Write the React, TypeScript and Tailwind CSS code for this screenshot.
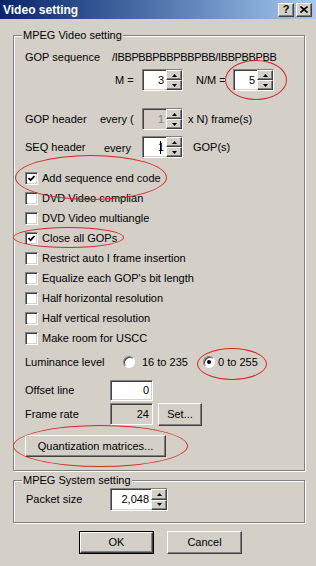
import React from 'react';

const sunken =
  'border border-t-[#808080] border-l-[#808080] border-r-white border-b-white shadow-[inset_1px_1px_0_#404040,inset_-1px_-1px_0_#d4d0c8]';
const raised =
  'border border-t-white border-l-white border-r-[#404040] border-b-[#404040] shadow-[inset_-1px_-1px_0_#808080] bg-[#d4d0c8]';

const Arrow = ({ down }: { down?: boolean }) => (
  <svg width="5" height="3" viewBox="0 0 5 3">
    <path d={down ? 'M0 0 H5 L2.5 3 Z' : 'M0 3 H5 L2.5 0 Z'} fill="#000" />
  </svg>
);

const Spin = ({ value, disabled, cursor, className }: { value: string; disabled?: boolean; cursor?: boolean; className: string }) => (
  <div className={`${sunken} flex ${disabled ? 'bg-[#d4d0c8]' : 'bg-white'} ${className}`}>
    <div className={`flex-1 flex items-center justify-end pr-[2px] ${disabled ? 'text-[#808080]' : 'text-black'}`}>
      {cursor && <span className="w-[1px] h-[13px] bg-black mr-[-3px]" />}
      {value}
    </div>
    <div className="w-[16px] flex flex-col">
      <div className={`${raised} flex-1 flex items-center justify-center`}>
        <Arrow />
      </div>
      <div className={`${raised} flex-1 flex items-center justify-center`}>
        <Arrow down />
      </div>
    </div>
  </div>
);

const Check = ({ checked, label }: { checked?: boolean; label: string }) => (
  <div className="h-[20px] flex items-center">
    <div className={`${sunken} bg-white w-[13px] h-[13px] mr-[4px] flex items-center justify-center`}>
      {checked && (
        <svg width="7" height="7" viewBox="0 0 7 7">
          <path d="M0.5 3 L2.6 5.2 L6.5 1" stroke="#000" strokeWidth="1.7" fill="none" />
        </svg>
      )}
    </div>
    <span>{label}</span>
  </div>
);

const Radio = ({ on }: { on?: boolean }) => (
  <div className="w-[12px] h-[12px] rounded-full bg-white border border-t-[#808080] border-l-[#808080] border-r-white border-b-white shadow-[inset_1px_1px_0_#404040] flex items-center justify-center">
    {on && <div className="w-[4px] h-[4px] rounded-full bg-black" />}
  </div>
);

const Ellipse = ({ className }: { className: string }) => (
  <div className={`absolute rounded-[50%] border border-[#d42a2a] pointer-events-none ${className}`} />
);

const GroupBox = ({ label, className, children }: { label: string; className: string; children: React.ReactNode }) => (
  <div className={`relative ml-[13px] w-[292px] border border-[#808080] shadow-[inset_1px_1px_0_#fff,1px_1px_0_#fff] ${className}`}>
    <span className="absolute left-[8px] top-[-8px] bg-[#d4d0c8] px-[1px] leading-[14px]">{label}</span>
    {children}
  </div>
);

const boxes = [
  { label: 'Add sequence end code', checked: true },
  { label: 'DVD Video complian' },
  { label: 'DVD Video multiangle' },
  { label: 'Close all GOPs', checked: true },
  { label: 'Restrict auto I frame insertion' },
  { label: "Equalize each GOP's bit length" },
  { label: 'Half horizontal resolution' },
  { label: 'Half vertical resolution' },
  { label: 'Make room for USCC' },
];

export default function App() {
  return (
    <div className="relative w-[316px] h-[566px] bg-[#d4d0c8] overflow-hidden text-[11px] text-black font-['Liberation_Sans',Arial,sans-serif]">
      {/* title bar */}
      <div className="h-[19px] flex items-center bg-linear-to-r from-[#0a246a] to-[#a6caf0]">
        <span className="pl-[3px] text-white font-bold text-[12px]">Video setting</span>
        <div className="ml-auto flex gap-[2px] pr-[4px]">
          <div className={`${raised} w-[16px] h-[14px] flex items-center justify-center font-bold text-[11px] leading-none`}>?</div>
          <div className={`${raised} w-[16px] h-[14px] flex items-center justify-center`}>
            <svg width="8" height="7" viewBox="0 0 8 7">
              <path d="M0.5 0.5 L7.5 6.5 M7.5 0.5 L0.5 6.5" stroke="#000" strokeWidth="1.6" />
            </svg>
          </div>
        </div>
      </div>

      {/* MPEG video */}
      <GroupBox label="MPEG Video setting" className="mt-[16px] pt-[10px] pl-[11px] pb-[13px]">
        <div className="h-[22px] flex items-center">
          <span className="w-[87px]">GOP sequence</span>
          <span className="whitespace-nowrap tracking-[-0.35px]">/IBBPBBPBBPBBPBB/IBBPBBPBB</span>
        </div>
        <div className="h-[24px] flex items-center">
          <span className="w-[90px]" />
          <span className="w-[27px]">M =</span>
          <Spin value="3" className="w-[41px] h-[22px]" />
          <span className="ml-[13px] w-[37px]">N/M =</span>
          <Spin value="5" className="w-[41px] h-[22px]" />
        </div>
        <div className="mt-[16px] h-[22px] flex items-center">
          <span className="w-[75px]">GOP header</span>
          <span className="w-[42px]">every (</span>
          <Spin value="1" disabled className="w-[41px] h-[22px]" />
          <span className="ml-[5px]">x N) frame(s)</span>
        </div>
        <div className="mt-[6px] h-[22px] flex items-center">
          <span className="w-[79px]">SEQ header</span>
          <span className="w-[38px] pt-[3px]">every</span>
          <Spin value="1" cursor className="w-[41px] h-[22px]" />
          <span className="ml-[10px]">GOP(s)</span>
        </div>
        <div className="mt-[10px] flex flex-col">
          {boxes.map((b) => (
            <Check key={b.label} label={b.label} checked={b.checked} />
          ))}
        </div>
        <div className="mt-[4px] h-[20px] flex items-center">
          <span className="w-[98px]">Luminance level</span>
          <Radio />
          <span className="ml-[7px] w-[61px]">16 to 235</span>
          <Radio on />
          <span className="ml-[3px]">0 to 255</span>
        </div>
        <div className="mt-[7px] h-[22px] flex items-center">
          <span className="w-[85px]">Offset line</span>
          <div className={`${sunken} bg-white w-[43px] h-[21px] flex items-center justify-end pr-[3px]`}>0</div>
        </div>
        <div className="mt-[2px] h-[22px] flex items-center">
          <span className="w-[85px]">Frame rate</span>
          <div className={`${sunken} bg-[#d4d0c8] w-[43px] h-[22px] flex items-center justify-end pr-[3px]`}>24</div>
          <div className={`${raised} ml-[5px] w-[44px] h-[23px] flex items-center justify-center`}>Set...</div>
        </div>
        <div className={`${raised} mt-[10px] w-[141px] h-[22px] flex items-center justify-center`}>Quantization matrices...</div>
      </GroupBox>

      {/* MPEG system */}
      <GroupBox label="MPEG System setting" className="mt-[9px] pt-[7px] pl-[12px] pb-[11px]">
        <div className="h-[23px] flex items-center">
          <span className="w-[84px]">Packet size</span>
          <Spin value="2,048" className="w-[58px] h-[23px]" />
        </div>
      </GroupBox>

      {/* buttons */}
      <div className="mt-[8px] pl-[79px] flex gap-[13px]">
        <div className="w-[75px] h-[23px] border border-black">
          <div className={`${raised} w-full h-full flex items-center justify-center`}>OK</div>
        </div>
        <div className={`${raised} w-[75px] h-[23px] flex items-center justify-center`}>Cancel</div>
      </div>

      {/* red annotations */}
      <Ellipse className="left-[225px] top-[60px] w-[62px] h-[40px]" />
      <Ellipse className="left-[15px] top-[155px] w-[152px] h-[45px]" />
      <Ellipse className="left-[13px] top-[227px] w-[111px] h-[21px]" />
      <Ellipse className="left-[197px] top-[348px] w-[70px] h-[32px]" />
      <Ellipse className="left-[13px] top-[425px] w-[175px] h-[42px]" />
    </div>
  );
}
